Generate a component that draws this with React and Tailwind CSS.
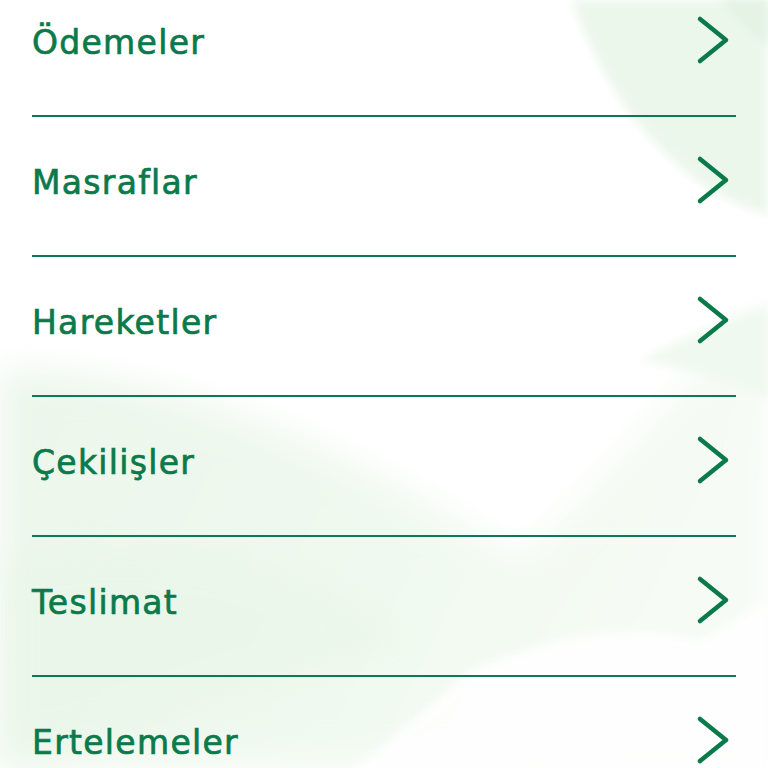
import React from "react";

const items = ["Ödemeler", "Masraflar", "Hareketler", "Çekilişler", "Teslimat", "Ertelemeler"];

function Chevron() {
  return (
    <svg width="36" height="50" viewBox="0 0 36 50" fill="none" className="shrink-0">
      <path d="M5 4 L31 25 L5 46" stroke="#0b7a4b" strokeWidth="4.5" strokeLinecap="round" strokeLinejoin="round" />
    </svg>
  );
}

function Background() {
  return (
    <svg className="absolute inset-0" width="768" height="768" viewBox="0 0 768 768" preserveAspectRatio="none">
      <defs>
        <filter id="blur" x="-20%" y="-20%" width="140%" height="140%">
          <feGaussianBlur stdDeviation="5" />
        </filter>
        <filter id="blur2" x="-20%" y="-20%" width="140%" height="140%">
          <feGaussianBlur stdDeviation="18" />
        </filter>
        <linearGradient id="g1" x1="0" y1="0" x2="1" y2="0.3">
          <stop offset="0" stopColor="#ebf6ea" />
          <stop offset="0.6" stopColor="#f0f9ef" />
          <stop offset="1" stopColor="#f6fbf5" />
        </linearGradient>
      </defs>
      <rect width="768" height="768" fill="#ffffff" />
      <path d="M0 370 C 200 370 380 470 520 560 C 620 470 700 360 768 300 L768 768 L0 768 Z" fill="url(#g1)" filter="url(#blur2)" />
      <path d="M0 560 C 150 520 300 560 420 640 L0 768 Z" fill="#e9f6e8" filter="url(#blur2)" opacity="0.6" />
      <path d="M330 790 L470 670 C 540 640 620 620 700 640 L768 600 L768 790 Z" fill="#ffffff" filter="url(#blur)" opacity="0.85" />
      <path d="M572 0 C 610 110 680 190 768 215 L768 0 Z" fill="#ecf7ec" filter="url(#blur)" />
      <path d="M720 0 C 735 20 750 35 768 45 L768 0 Z" fill="#e4f3e4" filter="url(#blur)" />
      <path d="M640 360 C 700 330 740 315 768 305 L768 400 C 730 380 690 370 640 360 Z" fill="#f0f9ef" filter="url(#blur)" />
    </svg>
  );
}

export default function App() {
  return (
    <div className="relative w-[768px] h-[768px] overflow-hidden bg-white" style={{ fontFamily: "'DejaVu Sans', sans-serif" }}>
      <Background />
      <div className="relative -mt-[23px] mx-[32px]">
        {items.map((t) => (
          <div key={t} className="flex items-center justify-between h-[140px] border-b-2 border-[#10785a]">
            <span className="mb-[8px] text-[33px] font-normal text-[#0b7a4b] tracking-[1.3px] leading-none [-webkit-text-stroke:0.7px_#0b7a4b]">{t}</span>
            <div className="mr-[5px] mb-[12px]">
              <Chevron />
            </div>
          </div>
        ))}
      </div>
    </div>
  );
}
